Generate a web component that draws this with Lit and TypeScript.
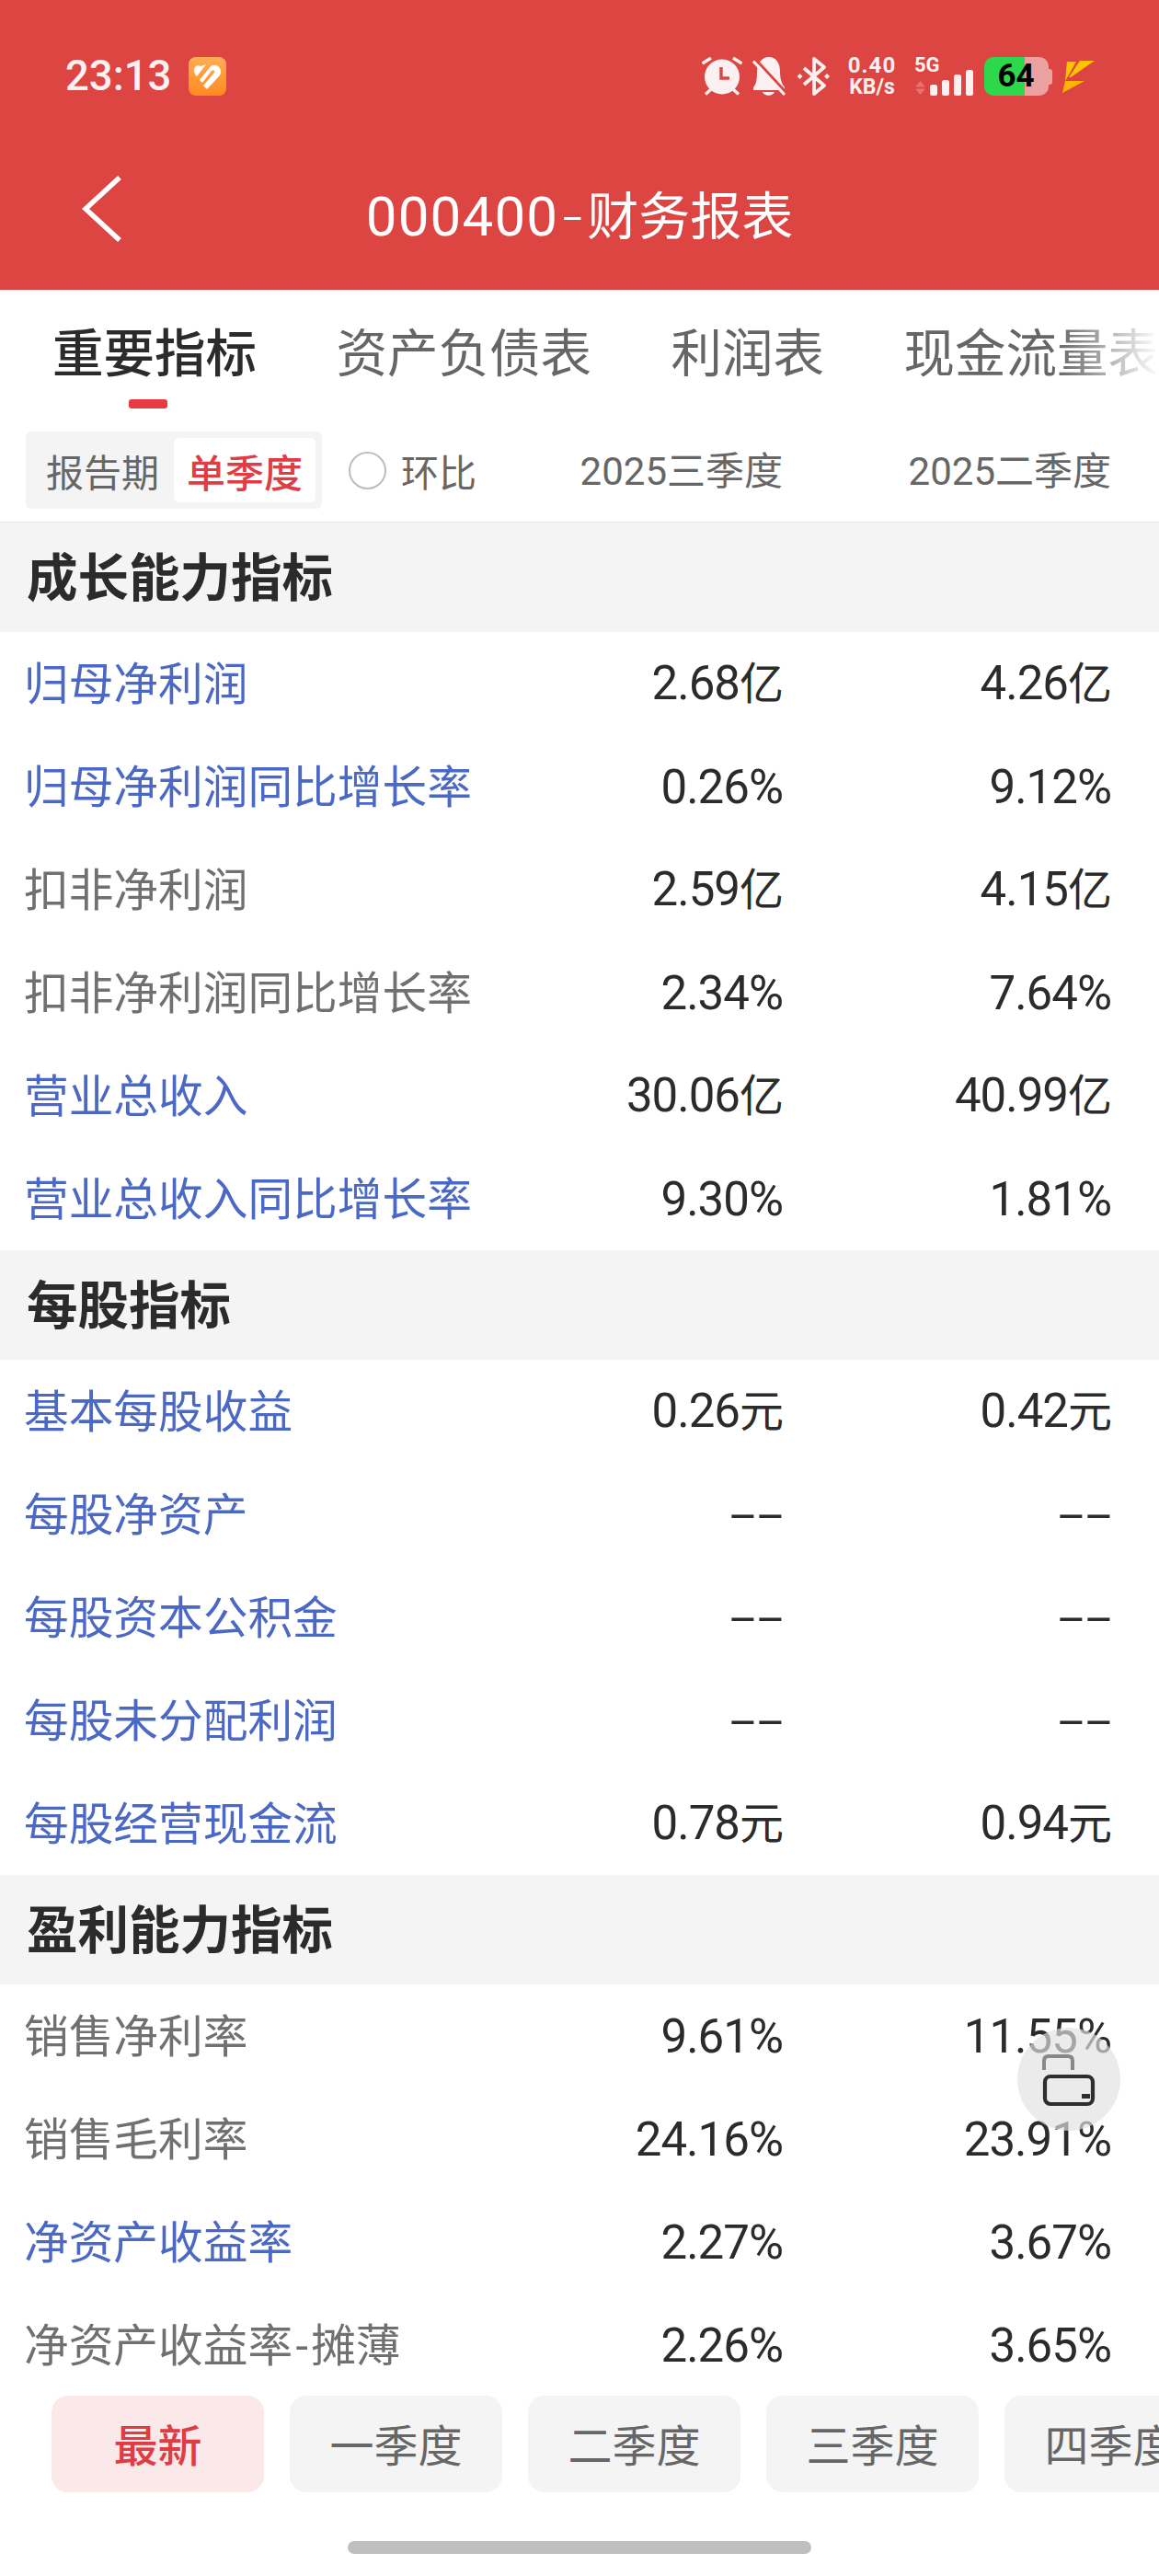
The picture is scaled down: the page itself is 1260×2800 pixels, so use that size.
import { LitElement, html, css } from "lit";
import { customElement } from "lit/decorators.js";

type Row = [string, string, string, boolean];
const sections: { title: string; rows: Row[] }[] = [
  {
    title: "成长能力指标",
    rows: [
      ["归母净利润", "2.68亿", "4.26亿", true],
      ["归母净利润同比增长率", "0.26%", "9.12%", true],
      ["扣非净利润", "2.59亿", "4.15亿", false],
      ["扣非净利润同比增长率", "2.34%", "7.64%", false],
      ["营业总收入", "30.06亿", "40.99亿", true],
      ["营业总收入同比增长率", "9.30%", "1.81%", true],
    ],
  },
  {
    title: "每股指标",
    rows: [
      ["基本每股收益", "0.26元", "0.42元", true],
      ["每股净资产", "--", "--", true],
      ["每股资本公积金", "--", "--", true],
      ["每股未分配利润", "--", "--", true],
      ["每股经营现金流", "0.78元", "0.94元", true],
    ],
  },
  {
    title: "盈利能力指标",
    rows: [
      ["销售净利率", "9.61%", "11.55%", false],
      ["销售毛利率", "24.16%", "23.91%", false],
      ["净资产收益率", "2.27%", "3.67%", true],
      ["净资产收益率-摊薄", "2.26%", "3.65%", false],
    ],
  },
];

const W = "#fdf0f0";
const R = "#dc4541";
const logo = html`<svg class="logo" width="41" height="42" viewBox="0 0 41 42">
  <defs><linearGradient id="lg" x1="0" y1="0" x2="0" y2="1"><stop offset="0" stop-color="#ffad55"/><stop offset="1" stop-color="#ff8a1f"/></linearGradient></defs>
  <rect width="41" height="42" rx="8" fill="url(#lg)"/>
  <path d="M6 15 C6 10 10 8 13 10 L19 8 L9 21 C7 19 6 17 6 15Z" fill="#fff"/>
  <path d="M12 25 L24 10 C29 7 35 10 35 16 C35 18 34 20 33 21 L20 35 L16 31 L28 17 C29 15 27 13 25 15 L15 28Z" fill="#fff"/>
</svg>`;
const alarm = html`<svg width="44" height="42" viewBox="0 0 44 42">
  <circle cx="22" cy="21.500" r="19" fill="${W}"/>
  <path d="M0.500 7 L10 1 M43.500 7 L34 1 M4 40.500 L10 35 M40 40.500 L34 35" stroke="${W}" stroke-width="3.400" fill="none"/>
  <path d="M21 11 V23 H30" stroke="${R}" stroke-width="3.400" fill="none"/>
</svg>`;
const bell = html`<svg width="37" height="43" viewBox="0 0 37 43">
  <path d="M18 0 C26 0 30 7 30 16 C30 26 33 30 35 33 V36 H1 V33 C4 30 5 25 5 16 C5 7 10 0 18 0Z" fill="${W}"/>
  <path d="M11 38 H24 C22 43 13 43 11 38Z" fill="${W}"/>
  <path d="M2 1 L39 41" stroke="${R}" stroke-width="3" fill="none"/>
  <path d="M1 4.500 L35 41" stroke="${W}" stroke-width="3" fill="none"/>
</svg>`;
const bt = html`<svg width="36" height="42" viewBox="0 0 36 42">
  <path d="M8 12 L30 31 L19 40 V2 L30 11 L8 30" stroke="${W}" stroke-width="3.800" fill="none" stroke-linejoin="round"/>
  <path d="M0.500 21 l3 -3 l3 3 l-3 3Z M30 21 l3 -3 l3 3 l-3 3Z" fill="${W}"/>
</svg>`;
const signal = html`<svg width="64" height="42" viewBox="0 0 64 42">
  <path d="M6.500 26 L1 32.500 H12Z M1 34.500 H12 L6.500 41Z" fill="#e87370"/>
  <rect x="17" y="30" width="8" height="12" rx="2.500" fill="${W}"/>
  <rect x="30" y="25" width="8" height="17" rx="2.500" fill="${W}"/>
  <rect x="43" y="19" width="8" height="23" rx="2.500" fill="${W}"/>
  <rect x="56" y="14" width="8" height="28" rx="2.500" fill="${W}"/>
</svg>`;
const bolt = html`<svg width="35" height="36" viewBox="0 0 35 36">
  <path d="M5 1 H15 L6 17 L3 22Z" fill="#ffc400"/>
  <path d="M19 0 H35 L9 18 H7Z" fill="#ffc400"/>
  <path d="M3 22 H24 L0 35Z" fill="#ffb300"/>
</svg>`;
const back = html`<svg width="44" height="74" viewBox="0 0 44 74">
  <path d="M41 3 L4 37 L41 71" stroke="#fff" stroke-width="5.500" fill="none"/>
</svg>`;
const lock = html`<svg width="60" height="60" viewBox="0 0 60 60">
  <path d="M4 19 V9 Q4 4 9 4 H30 Q35 4 35 9 V19" stroke="#888" stroke-width="4" fill="none"/>
  <rect x="5" y="26" width="52" height="30" rx="6" stroke="#2e2e2e" stroke-width="4.200" fill="none"/>
  <rect x="45" y="45" width="9" height="5" fill="#2e2e2e"/>
</svg>`;

@customElement("app-root")
export class AppRoot extends LitElement {
  static styles = css`
    :host {
      display: block;
      width: 1260px;
      height: 2800px;
      position: relative;
      overflow: hidden;
      background: #fff;
      font-family: Roboto, "Noto Sans CJK SC", sans-serif;
      color: #2b2b2b;
    }
    .page { display: flex; flex-direction: column; height: 2800px; }
    .header { height: 315px; background: #dc4541; display: flex; flex-direction: column; padding-top: 62px; box-sizing: border-box; flex: none; }
    .status { height: 42px; display: flex; align-items: center; padding-left: 71px; color: #fdf0f0; }
    .time { font-size: 45.500px; font-weight: 500; line-height: 42px; width: 134px; }
    .logo { display: block; }
    .sicons { margin-left: 517px; display: flex; align-items: flex-start; height: 42px; }
    .sicons > svg { display: block; flex: none; }
    .i-bell { margin-left: 11px; display: flex; }
    .i-bt { margin-left: 11px; display: flex; }
    .speed { margin-left: 19px; width: 54px; display: flex; flex-direction: column; align-items: center; font-weight: 700; gap: 6px; }
    .speed b { font-size: 24px; font-weight: 700; letter-spacing: 1.100px; line-height: 18px; }
    .speed span { font-size: 23px; line-height: 18px; white-space: nowrap; }
    .net { margin-left: 19px; width: 64px; position: relative; }
    .net-label { position: absolute; left: 0; top: 0; font-size: 22px; font-weight: 700; line-height: 18px; }
    .net svg { display: block; }
    .battery { margin-left: 12px; width: 70px; height: 42px; border-radius: 10px; background: linear-gradient(90deg, #2dd84c 0 44px, #eca1a1 44px); color: #000; font-size: 35px; font-weight: 700; line-height: 42px; text-align: center; position: relative; flex: none; }
    .battery::after { content: ""; position: absolute; right: -4px; top: 13px; width: 4px; height: 17px; border-radius: 0 3px 3px 0; background: #eca1a1; }
    .battery span { display: block; margin-right: 1px; }
    .i-bolt { margin-left: 15px; margin-top: 4px; display: flex; }
    .nav { margin-top: 62px; height: 140px; display: flex; align-items: center; justify-content: center; position: relative; color: #fff; font-size: 56px; line-height: 1; }
    .nav em { font-style: normal; font-weight: 400; font-size: 60px; letter-spacing: 1.200px; }
    .nav .hy { display: inline-block; width: 31px; text-align: center; letter-spacing: 0; transform: scaleX(1.300); font-weight: 300; }
    .nav .back { position: absolute; left: 89px; top: 24px; display: flex; }

    .tabs { height: 154px; flex: none; display: flex; gap: 86.500px; padding-left: 57px; box-sizing: border-box; overflow: hidden; position: relative; white-space: nowrap; }
    .tab { font-size: 55.500px; line-height: 70px; padding-top: 36px; color: #666; flex: none; display: flex; flex-direction: column; align-items: center; }
    .tab.on { color: #2b2b2b; font-weight: 500; }
    .tab i { display: block; width: 42px; height: 10px; border-radius: 3px; background: #e93b43; margin: 13px 14px 0 0; }
    .fade { position: absolute; right: 0; top: 0; bottom: 0; width: 110px; background: linear-gradient(90deg, rgba(255,255,255,0), #fff); }

    .filter { height: 99px; flex: none; box-sizing: border-box; border-bottom: 1px solid #e6e6e6; display: grid; grid-template-columns: minmax(0, 1fr) 357px 357px; padding: 0 52px 0 28px; white-space: nowrap; }
    .filter-left { display: flex; height: 84px; align-items: center; }
    .seg { width: 322px; height: 84px; flex: none; background: #f4f4f4; border-radius: 6px; display: flex; align-items: center; box-sizing: border-box; padding: 0 7px 0 22px; font-size: 41px; color: #666; justify-content: space-between; }
    .seg b { width: 154px; height: 70px; background: #fff; border-radius: 6px; color: #e03c44; font-size: 42px; font-weight: 500; display: flex; align-items: center; justify-content: center; }
    .radio { width: 41px; height: 41px; box-sizing: border-box; border: 2px solid #bdbdbd; border-radius: 50%; margin-left: 29px; flex: none; }
    .huan { margin-left: 16px; font-size: 41px; color: #666; }
    .chead { height: 78px; display: flex; align-items: center; justify-content: flex-end; font-size: 42px; color: #666; }

    .table { flex: 1; min-height: 0; overflow: hidden; }
    .sec { height: 119px; box-sizing: border-box; padding: 4px 0 0 29px; background: #f4f4f4; display: flex; align-items: center; font-size: 55.500px; font-weight: 700; color: #2b2b2b; line-height: 1; }
    .row { height: 112px; box-sizing: border-box; display: grid; grid-template-columns: minmax(0, 1fr) 357px 357px; padding: 0 51px 6px 26px; align-items: center; font-size: 48.700px; white-space: nowrap; }
    .lbl { color: #707070; }
    .lbl.link { color: #4a68c4; }
    .lbl .hy { display: inline-block; width: 20px; text-align: center; }
    .val { text-align: right; color: #2b2b2b; font-size: 51px; letter-spacing: -1px; line-height: 60px; margin-top: 7px; }
    .val .unit { font-size: 48px; letter-spacing: 0; }
    .val .pct { font-size: 52px; letter-spacing: 2px; margin-right: -2px; }
    .dash { display: inline-block; transform: scaleX(2.100); transform-origin: right center; letter-spacing: 1px; font-size: 48px; margin-right: -2px; }

    .bottom { flex: none; height: 196px; display: flex; flex-direction: column; background: #fff; position: relative; }
    .btns { display: flex; gap: 28px; padding-left: 56px; overflow: hidden; height: 105px; flex: none; }
    .btn { width: 231px; height: 105px; box-sizing: border-box; padding-bottom: 4px; flex: none; border-radius: 18px; background: #f4f4f4; color: #666; font-size: 48px; display: flex; align-items: center; justify-content: center; }
    .btn.on { background: #fbe9ea; color: #e03c44; font-weight: 500; }
    .pill { width: 504px; height: 14px; border-radius: 7px; background: #bfbfbf; margin: 53px auto 0; }

    .float { position: absolute; left: 1106px; top: 2204px; width: 112px; height: 112px; border-radius: 50%; background: rgba(225,225,225,0.67); }
    .float svg { position: absolute; left: 25px; top: 27px; }
  `;

  private val(v: string) {
    if (v === "--") return html`<span class="dash">--</span>`;
    const m = v.match(/^([\d.]+)(.*)$/);
    if (!m) return v;
    return html`${m[1]}<span class="${m[2] === "%" ? "pct" : "unit"}">${m[2]}</span>`;
  }

  private label(t: string) {
    const i = t.indexOf("-");
    if (i < 0) return t;
    return html`${t.slice(0, i)}<span class="hy">-</span>${t.slice(i + 1)}`;
  }

  render() {
    return html`<div class="page">
      <div class="header">
        <div class="status">
          <span class="time">23:13</span>${logo}
          <div class="sicons">
            ${alarm}
            <span class="i-bell">${bell}</span>
            <span class="i-bt">${bt}</span>
            <div class="speed"><b>0.40</b><span>KB/s</span></div>
            <div class="net"><span class="net-label">5G</span>${signal}</div>
            <div class="battery"><span>64</span></div>
            <span class="i-bolt">${bolt}</span>
          </div>
        </div>
        <div class="nav"><span class="back">${back}</span><em>000400</em><em class="hy">-</em>财务报表</div>
      </div>
      <div class="tabs">
        <div class="tab on">重要指标<i></i></div>
        <div class="tab">资产负债表</div>
        <div class="tab">利润表</div>
        <div class="tab">现金流量表</div>
        <div class="fade"></div>
      </div>
      <div class="filter">
        <div class="filter-left">
          <div class="seg"><span>报告期</span><b>单季度</b></div>
          <span class="radio"></span><span class="huan">环比</span>
        </div>
        <div class="chead">2025三季度</div>
        <div class="chead">2025二季度</div>
      </div>
      <div class="table">
        ${sections.map(
          (s) => html`<div class="sec">${s.title}</div>
            ${s.rows.map(
              (r) => html`<div class="row">
                <span class="lbl ${r[3] ? "link" : ""}">${this.label(r[0])}</span>
                <span class="val">${this.val(r[1])}</span>
                <span class="val">${this.val(r[2])}</span>
              </div>`
            )}`
        )}
      </div>
      <div class="bottom">
        <div class="btns">
          <div class="btn on">最新</div>
          <div class="btn">一季度</div>
          <div class="btn">二季度</div>
          <div class="btn">三季度</div>
          <div class="btn">四季度</div>
        </div>
        <div class="pill"></div>
      </div>
    </div>
    <div class="float">${lock}</div>`;
  }
}
